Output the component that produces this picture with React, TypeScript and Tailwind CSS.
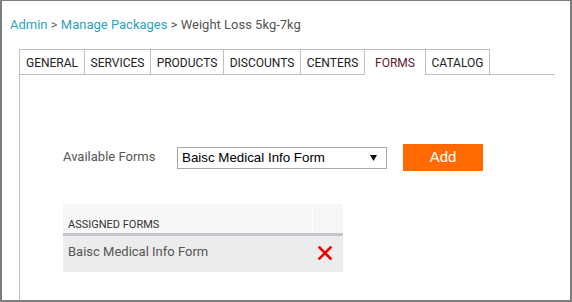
import { useState } from "react";

const tabs = [
  { label: "GENERAL", w: "w-[65px]" },
  { label: "SERVICES", w: "w-[66px]" },
  { label: "PRODUCTS", w: "w-[73px]" },
  { label: "DISCOUNTS", w: "w-[77px]" },
  { label: "CENTERS", w: "w-[64px]" },
  { label: "FORMS", w: "w-[61px]" },
  { label: "CATALOG", w: "w-[65px]" },
];

const RemoveIcon = () => (
  <svg width="14" height="14" viewBox="0 0 14 14" className="block">
    <path d="M1.5 1.5 L12.5 12.5 M12.5 1.5 L1.5 12.5" stroke="#ee0000" strokeWidth="2.6" strokeLinecap="square" />
  </svg>
);

export default function App() {
  const [active] = useState("FORMS");
  const [forms] = useState<string[]>(["Baisc Medical Info Form"]);

  return (
    <div className="w-[572px] h-[302px] bg-white border-[#7d7d7d] border-t border-l-2 border-r-2 border-b-2 flex flex-col font-['Roboto',sans-serif] overflow-hidden">
      <div className="pl-[8px] pt-[16px] h-[48px] text-[13px] leading-[16px]">
        <span className="text-[#2aa3c4]">Admin</span>
        <span className="text-[#666]"> &gt; </span>
        <span className="text-[#2aa3c4]">Manage Packages</span>
        <span className="text-[#555]"> &gt; Weight Loss 5kg-7kg</span>
      </div>

      <div className="ml-[17px] mr-[15px] flex border-b border-[#bfbfbf]">
        {tabs.map((t, i) => (
          <div
            key={t.label}
            className={`${t.w} h-[26px] -mb-px flex items-center justify-center pt-[1px] text-[12px] border-t border-l border-[#bfbfbf] ${
              i === tabs.length - 1 ? "border-r" : ""
            } ${t.label === active ? "bg-white border-b border-b-white text-[#5a1a2a]" : "text-[#222] border-b border-b-[#bfbfbf]"}`}
          >
            {t.label}
          </div>
        ))}
      </div>

      <div className="ml-[17px] flex-1 border-l border-[#bfbfbf] pl-[43px] pt-[69px]">
        <div className="flex items-center h-[27px]">
          <div className="w-[114px] text-[13px] text-[#555] pb-[2px]">Available Forms</div>
          <div className="w-[210px] h-[22px] border border-[#a9a9a9] flex items-center justify-between pl-[4px] pr-[9px] font-['Liberation_Sans',sans-serif] text-[13.33px] text-black">
            <span>Baisc Medical Info Form</span>
            <svg width="7" height="6" viewBox="0 0 7 6">
              <path d="M0 0 H7 L3.5 6 Z" fill="#111" />
            </svg>
          </div>
          <button className="ml-[16px] w-[80px] h-[27px] bg-[#ff6a00] text-white text-[15px] font-['Liberation_Sans',sans-serif]">
            Add
          </button>
        </div>

        <div className="mt-[33px] w-[280px]">
          <div className="flex h-[32px] bg-[#f7f7f7] border-b-[3px] border-[#c2c6ca]">
            <div className="flex-1 flex items-end pl-[5px] pb-[3px] text-[11px] leading-[11px] text-[#333] border-r border-white mt-[4px]">
              ASSIGNED FORMS
            </div>
            <div className="w-[30px]" />
          </div>
          {forms.map((f) => (
            <div key={f} className="flex items-center h-[36px] bg-[#ececec]">
              <div className="flex-1 pl-[5px] pb-[4px] text-[13px] text-[#555]">{f}</div>
              <div className="w-[30px] pl-[5px] pb-[2px]">
                <RemoveIcon />
              </div>
            </div>
          ))}
        </div>
      </div>
    </div>
  );
}
